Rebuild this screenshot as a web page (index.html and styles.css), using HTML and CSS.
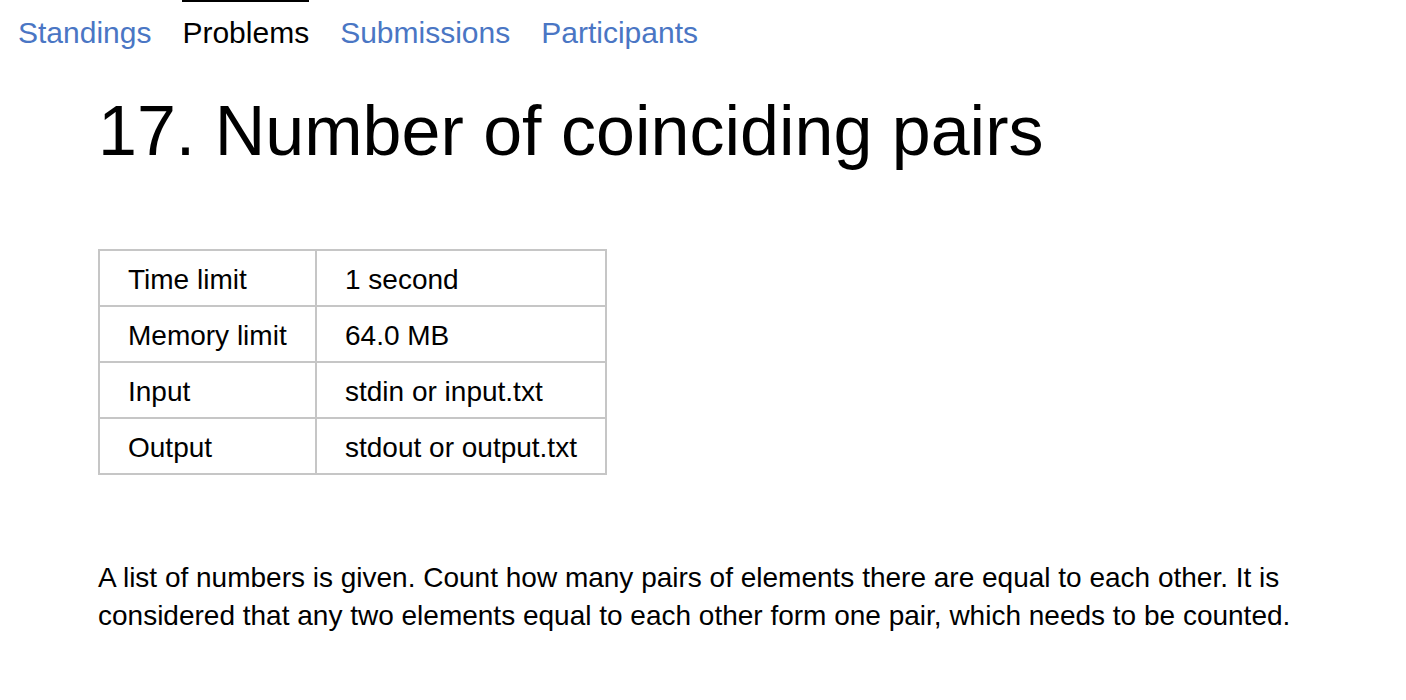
FILE: index.html
```html
<!DOCTYPE html>
<html>
<head>
<meta charset="utf-8">
<link rel="stylesheet" href="styles.css">
</head>
<body>
<nav class="tabs">
  <a class="tab" href="#">Standings</a>
  <a class="tab active" href="#">Problems</a>
  <a class="tab" href="#">Submissions</a>
  <a class="tab" href="#">Participants</a>
</nav>
<main class="content">
  <h1 class="title">17. Number of coinciding pairs</h1>
  <table class="limits">
    <tr><td>Time limit</td><td>1 second</td></tr>
    <tr><td>Memory limit</td><td>64.0 MB</td></tr>
    <tr><td>Input</td><td>stdin or input.txt</td></tr>
    <tr><td>Output</td><td>stdout or output.txt</td></tr>
  </table>
  <p class="statement">A list of numbers is given. Count how many pairs of elements there are equal to each other. It is considered that any two elements equal to each other form one pair, which needs to be counted.</p>
</main>
</body>
</html>
```

FILE: styles.css
```css
html, body {
  margin: 0;
  padding: 0;
  background: #fff;
  color: #000;
  font-family: "Liberation Sans", Arial, sans-serif;
}

.tabs {
  display: flex;
  gap: 31px;
  padding-left: 18px;
}

.tab {
  font-size: 30px;
  line-height: 34px;
  padding-top: 14px;
  border-top: 2px solid transparent;
  color: #4a76c4;
  text-decoration: none;
}

.tab.active {
  color: #000;
  border-top-color: #000;
}

.content {
  padding-left: 98px;
  width: 1220px;
}

.title {
  font-size: 70px;
  font-weight: normal;
  line-height: 80px;
  margin: 41px 0 0;
}

.limits {
  margin-top: 78px;
  border-collapse: collapse;
  font-size: 28px;
}

.limits td {
  border: 2px solid #c6c6c6;
  height: 51px;
  padding: 3px 28px 0;
  vertical-align: middle;
  white-space: nowrap;
}

.limits td:first-child {
  width: 159px;
}

.limits td:last-child {
  width: 232px;
}

.statement {
  margin: 84px 0 0;
  font-size: 28px;
  line-height: 38px;
}
```
